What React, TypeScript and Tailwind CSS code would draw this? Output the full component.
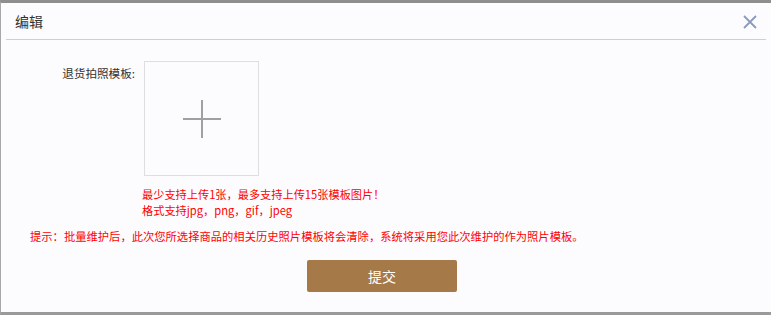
export default function App() {
  return (
    <div
      className="w-[771px] h-[315px] bg-[#fcfcff] border-t-[3px] border-b-[3px] border-l border-t-[#8e8e8e] border-b-[#9a9a9a] border-l-[#a8a8a8] flex flex-col overflow-hidden text-[#333]"
      style={{ fontFamily: '"Microsoft YaHei", "Noto Sans CJK SC", sans-serif' }}
    >
      <div className="mx-[5px] h-[37px] border-b border-[#c9cde6] flex items-center justify-between pl-[9px] pr-[8px]">
        <span className="text-[14px] text-[#333]">编辑</span>
        <svg width="16" height="16" viewBox="0 0 16 16" className="mt-[1px]">
          <path d="M2 2 L14 14 M14 2 L2 14" stroke="#8b9bbd" strokeWidth="1.8" />
        </svg>
      </div>

      <div className="flex mt-[21px]">
        <div className="w-[134px] text-right text-[11.6px] pt-[4px]">退货拍照模板:</div>
        <div className="ml-[9px] flex flex-col">
          <div className="w-[115px] h-[115px] border border-[#dedede] flex items-center justify-center">
            <svg width="40" height="40" viewBox="0 0 40 40">
              <path d="M20 1 V39 M1 20 H39" stroke="#a0a0a0" strokeWidth="2" />
            </svg>
          </div>
          <div className="mt-[10px] text-[11.2px] leading-[16px] text-[#f00] -ml-[2px]">
            <div>最少支持上传1张，最多支持上传15张模板图片！</div>
            <div>格式支持jpg，png，gif，jpeg</div>
          </div>
        </div>
      </div>

      <div className="mt-[10px] ml-[29px] text-[11.3px] leading-[16px] text-[#f00]">
        提示：批量维护后，此次您所选择商品的相关历史照片模板将会清除，系统将采用您此次维护的作为照片模板。
      </div>

      <div className="flex justify-center mt-[16px]">
        <button className="w-[150px] h-[32px] rounded-[2px] bg-[#a57a48] text-white text-[14px] ml-[-8px]">
          提交
        </button>
      </div>
    </div>
  );
}
